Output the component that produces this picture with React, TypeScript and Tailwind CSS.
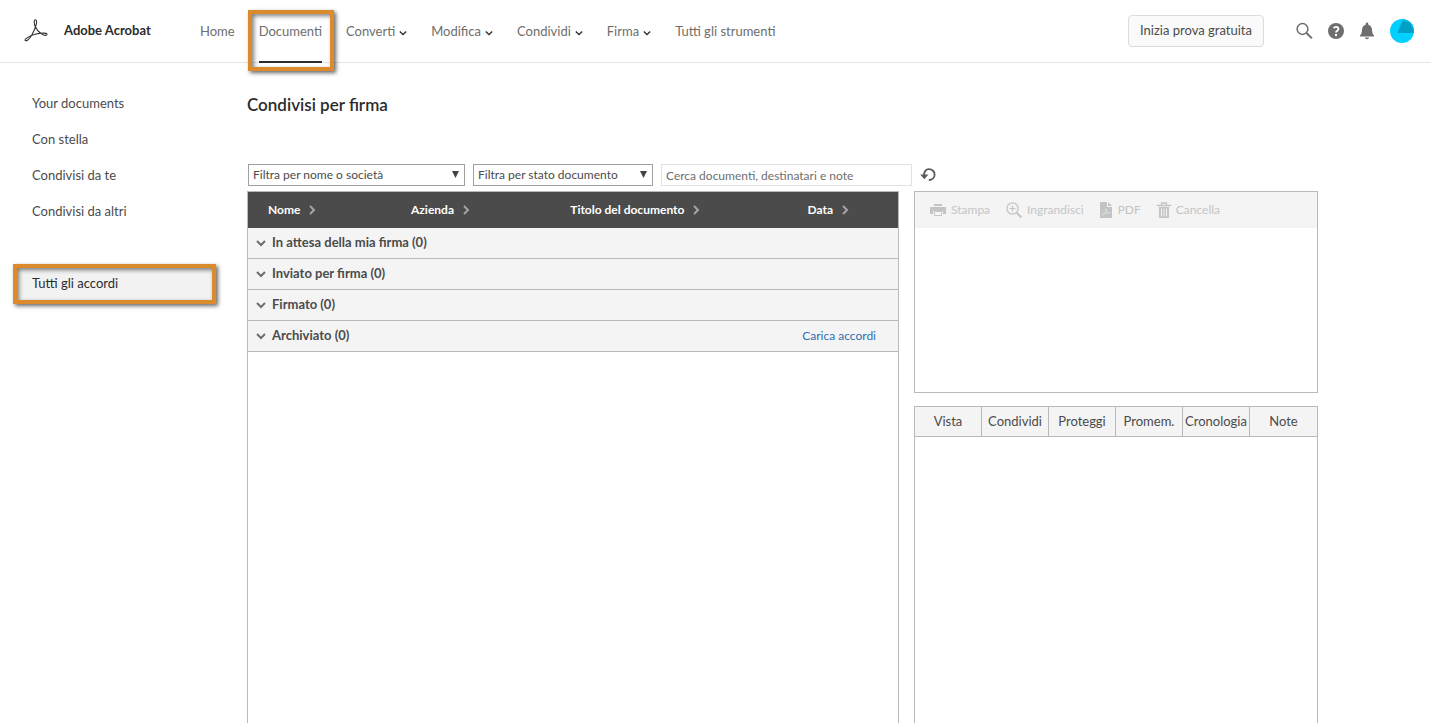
import React from 'react'
import clsx from 'clsx'

const navItems = [
  { label: 'Home' },
  { label: 'Documenti', active: true },
  { label: 'Converti', menu: true },
  { label: 'Modifica', menu: true },
  { label: 'Condividi', menu: true },
  { label: 'Firma', menu: true },
  { label: 'Tutti gli strumenti' },
]

const sideItems = ['Your documents', 'Con stella', 'Condivisi da te', 'Condivisi da altri']

const columns = ['Nome', 'Azienda', 'Titolo del documento', 'Data']

const groups = [
  { label: 'In attesa della mia firma (0)' },
  { label: 'Inviato per firma (0)' },
  { label: 'Firmato (0)' },
  { label: 'Archiviato (0)', link: 'Carica accordi' },
]

const tabs = ['Vista', 'Condividi', 'Proteggi', 'Promem.', 'Cronologia', 'Note']

function AcrobatLogo() {
  return (
    <svg width="24" height="24" viewBox="0 0 24 24" fill="none" stroke="#333" strokeWidth="1.100" strokeLinecap="round" strokeLinejoin="round">
      <path d="M2.600 21.600C.8 22.200.6 20.900 2 19.700c2.200-1.900 5.400-3.400 9-4.400 3.200-.9 6.600-1.300 9.300-1.200 2.500.1 3.100 1 2.400 1.700-1 .9-3.300.3-5.200-.9-2.600-1.600-5.200-4.700-6.400-7.700C10 4.200 9.800.8 11.300.7c1.500 0 1.500 2.800.7 5.700C10.800 10.700 6.200 20.500 2.600 21.600Z" />
    </svg>
  )
}

function Chevron({ className, direction = 'down', width = 2 }: { className?: string; direction?: 'down' | 'right'; width?: number }) {
  return (
    <svg className={className} viewBox="0 0 10 10" fill="none" stroke="currentColor" strokeWidth={width}>
      <path d={direction === 'down' ? 'M1 3l4 4 4-4' : 'M3 1l4 4-4 4'} />
    </svg>
  )
}

function SearchIcon() {
  return (
    <svg width="17" height="18" viewBox="0 0 17 18" fill="none" stroke="#6e6e6e">
      <circle cx="6.500" cy="7" r="5.400" strokeWidth="1.500" />
      <path d="M10.500 11l5.400 5.400" strokeWidth="2" />
    </svg>
  )
}

function HelpIcon() {
  return (
    <svg width="16" height="16" viewBox="0 0 16 16">
      <circle cx="8" cy="8" r="8" fill="#6e6e6e" />
      <path d="M5.600 5.200C6.300 4.300 7.200 3.900 8.100 3.900c1.400 0 2.300.8 2.300 2 0 1.900-2.300 1.900-2.300 3.700" fill="none" stroke="#fff" strokeWidth="1.900" />
      <circle cx="8" cy="12" r="1.200" fill="#fff" />
    </svg>
  )
}

function BellIcon() {
  return (
    <svg width="16" height="18" viewBox="0 0 16 18" fill="#6e6e6e">
      <path d="M8 .5c.9 0 1.300.6 1.300 1.500v.7c2.500.6 3.500 2.500 3.700 5 .2 3 .6 4.500 2 5.900v.9H1v-.9c1.400-1.400 1.800-2.900 2-5.900.2-2.500 1.200-4.400 3.700-5V2C6.700 1.100 7.100.5 8 .5Z" />
      <path d="M6 15.600h4c-.1 1-.9 1.700-2 1.700s-1.900-.7-2-1.700Z" />
    </svg>
  )
}

function Avatar() {
  return (
    <svg width="24" height="24" viewBox="0 0 24 24">
      <defs>
        <clipPath id="avatar">
          <circle cx="12" cy="12" r="12" />
        </clipPath>
      </defs>
      <g clipPath="url(#avatar)">
        <path fill="#00d0ff" d="M0 0h24v24H0z" />
        <path fill="#00b9e4" d="M12 0h12v14L12 2z" />
        <path fill="#009fc7" d="M12 2.500 19.500 3 24 14H7.500z" />
      </g>
    </svg>
  )
}

function ResetIcon() {
  return (
    <svg width="16" height="16" viewBox="0 0 16 16" fill="none" stroke="#5a5a5a" strokeWidth="1.800">
      <path d="M4.200 8.500C3.700 4.500 6 2.200 9 2.200c3.200 0 5.600 2.400 5.600 5.300 0 3-2.200 5.400-5.800 5.500" />
      <path d="M.2 7.600h8.200L4.300 12.300z" fill="#5a5a5a" stroke="none" />
    </svg>
  )
}

function PrintIcon() {
  return (
    <svg width="16" height="16" viewBox="0 0 16 16" fill="#c4c4c4">
      <path d="M4 2h8v2H4zM1 5h14c.6 0 1 .4 1 1v5c0 .6-.4 1-1 1h-2V9H3v3H1c-.6 0-1-.4-1-1V6c0-.6.4-1 1-1Z" />
      <path d="M4.500 9.500h7v4h-7z" fill="#f8f8f8" stroke="#c4c4c4" />
    </svg>
  )
}

function ZoomIcon() {
  return (
    <svg width="16" height="16" viewBox="0 0 16 16" fill="none" stroke="#c4c4c4">
      <circle cx="6.500" cy="6.500" r="5.600" strokeWidth="1.300" />
      <path d="M6.500 3.500v6M3.500 6.500h6" strokeWidth="1.200" />
      <path d="M10.700 10.700l4.700 4.700" strokeWidth="2" />
    </svg>
  )
}

function PdfIcon() {
  return (
    <svg width="13" height="16" viewBox="0 0 13 16" fill="#c4c4c4">
      <path d="M0 0h7v5h5v11H0zM8 0l4 4H8z" />
      <path d="M2.500 13c2-1 3.500-4 3.500-6.500 0 2.500 1.500 4 3.500 4.500-2.500-.2-5 .5-7 2Z" fill="none" stroke="#f4f4f4" strokeWidth=".5" />
    </svg>
  )
}

function TrashIcon() {
  return (
    <svg width="14" height="16" viewBox="0 0 14 16" fill="none" stroke="#c4c4c4">
      <path d="M0 3.500h14M4.500 3V1h5v2" strokeWidth="1.400" />
      <path d="M2 5h10v11H2z" fill="#c4c4c4" stroke="none" />
      <path d="M4.500 6.500v8M7 6.500v8M9.500 6.500v8" stroke="#f4f4f4" />
    </svg>
  )
}

const actions = [
  { label: 'Stampa', icon: <PrintIcon /> },
  { label: 'Ingrandisci', icon: <ZoomIcon /> },
  { label: 'PDF', icon: <PdfIcon /> },
  { label: 'Cancella', icon: <TrashIcon /> },
]

// Orange frame drawn over the element it calls out
function Highlight({ className }: { className: string }) {
  return (
    <span
      aria-hidden="true"
      className={clsx(
        'pointer-events-none absolute border-4 border-[#db8a2c] shadow-[2px_2px_4px_rgba(0,0,0,0.6),inset_2px_2px_4px_rgba(0,0,0,0.5)]',
        className,
      )}
    />
  )
}

function Header() {
  return (
    <header className="flex h-[63px] shrink-0 items-center border-b border-[#e4e4e4] pr-[17px] pl-6">
      <a href="#" className="flex w-44 shrink-0 items-center gap-4 text-[13px] font-bold text-[#2c2c2c]">
        <AcrobatLogo />
        Adobe Acrobat
      </a>
      <nav className="-mb-px flex items-center gap-6 self-stretch text-[13px] text-[#6e6e6e]">
        {navItems.map((item) =>
          item.menu ? (
            <button key={item.label} type="button" className="flex items-center gap-1 whitespace-nowrap">
              {item.label}
              <Chevron className="mt-[3px] size-2 text-[#333]" width={1.7} />
            </button>
          ) : (
            <a
              key={item.label}
              href="#"
              className={clsx('relative flex h-full items-center whitespace-nowrap', item.active && 'border-b-2 border-[#2c2c2c] pt-[2px]')}
            >
              {item.label}
              {item.active && <Highlight className="top-[10px] -right-3 -bottom-[10px] -left-[11px]" />}
            </a>
          ),
        )}
      </nav>
      <div className="ml-auto flex items-center gap-[15px]">
        <button
          type="button"
          className="mr-[17px] h-8 w-[136px] rounded-[4px] border border-[#dcdcdc] bg-[#fafafa] text-[13px] whitespace-nowrap text-[#4b4b4b]"
        >
          Inizia prova gratuita
        </button>
        <button type="button" aria-label="Cerca"><SearchIcon /></button>
        <button type="button" aria-label="Aiuto"><HelpIcon /></button>
        <button type="button" aria-label="Notifiche"><BellIcon /></button>
        <button type="button" aria-label="Profilo"><Avatar /></button>
      </div>
    </header>
  )
}

function Sidebar() {
  return (
    <aside className="w-[247px] shrink-0 pt-[23px] pr-[34px] pl-4 text-[13px] text-[#4b4b4b]">
      <ul>
        {sideItems.map((label) => (
          <li key={label}>
            <a href="#" className="flex h-9 items-center px-4">{label}</a>
          </li>
        ))}
      </ul>
      <a href="#" className="relative mt-9 flex h-9 items-center bg-[#f2f2f2] px-4 text-[#2c2c2c]">
        Tutti gli accordi
        <Highlight className="-inset-x-[3px] -inset-y-[2px]" />
      </a>
    </aside>
  )
}

function Filter({ label, className }: { label: string; className: string }) {
  return (
    <div className={clsx('relative', className)}>
      <select aria-label={label} className="block h-[22px] w-full appearance-none border border-[#a0a0a0] bg-white pl-1 text-[12px] text-[#4b4b4b]">
        <option>{label}</option>
      </select>
      <svg className="pointer-events-none absolute top-[7px] right-[6px]" width="7" height="7" viewBox="0 0 8 8" fill="#444">
        <path d="M0 0h8L4 8z" />
      </svg>
    </div>
  )
}

function Agreements() {
  return (
    <section className="border border-b-0 border-[#b9b9b9]">
      <table className="w-full table-fixed border-separate border-spacing-0 text-left text-[12px]">
        <colgroup>
          <col className="w-[22%]" />
          <col className="w-[24.5%]" />
          <col className="w-[36.5%]" />
          <col />
        </colgroup>
        <thead className="bg-[#4b4b4b] text-white">
          <tr className="h-9">
            {columns.map((label) => (
              <th key={label} scope="col" className="p-0 pl-5">
                <button type="button" className="flex items-center gap-[7px] font-bold whitespace-nowrap">
                  {label}
                  <Chevron direction="right" className="size-2.5 text-[#a5a5a5]" />
                </button>
              </th>
            ))}
          </tr>
        </thead>
        <tbody className="bg-[#f4f4f4] text-[#4b4b4b]">
          {groups.map((group) => (
            <tr key={group.label} className="h-[31px]">
              <th scope="rowgroup" colSpan={4} className="border-b border-[#b9b9b9] p-0 pr-[22px] pl-2">
                <div className="flex items-center justify-between">
                  <button type="button" className="flex items-center gap-1.5 text-[13px] font-bold">
                    <Chevron className="size-2.5 text-[#6e6e6e]" />
                    {group.label}
                  </button>
                  {group.link && <a href="#" className="font-normal text-[#2f6eb5]">{group.link}</a>}
                </div>
              </th>
            </tr>
          ))}
        </tbody>
      </table>
    </section>
  )
}

function Preview() {
  return (
    <div className="flex flex-col gap-[13px]">
      <section className="h-[202px] border border-[#b9b9b9]">
        <div className="flex h-9 items-center gap-4 bg-[#f4f4f4] pl-[15px] text-[12px] text-[#c4c4c4]">
          {actions.map((action) => (
            <button key={action.label} type="button" className="flex items-center gap-[5px]">
              {action.icon}
              {action.label}
            </button>
          ))}
        </div>
      </section>
      <section className="flex-1 border border-b-0 border-[#b9b9b9]">
        <div role="tablist" className="grid h-[30px] grid-cols-6 divide-x divide-[#b9b9b9] border-b border-[#b9b9b9] bg-[#f4f4f4] text-[13px] text-[#4b4b4b]">
          {tabs.map((label) => (
            <button key={label} type="button" role="tab" className="overflow-hidden whitespace-nowrap">{label}</button>
          ))}
        </div>
      </section>
    </div>
  )
}

export default function App() {
  return (
    <div className="flex min-h-screen flex-col bg-white font-['Lato','Noto_Sans',sans-serif]">
      <Header />
      <div className="flex flex-1">
        <Sidebar />
        <main className="flex max-w-[1071px] flex-1 flex-col">
          <h1 className="mt-[30px] text-[17px] leading-6 font-semibold text-[#2c2c2c]">Condivisi per firma</h1>
          <div className="mt-[47px] flex gap-2 pl-px">
            <Filter label="Filtra per nome o società" className="w-[217px]" />
            <Filter label="Filtra per stato documento" className="w-[180px]" />
            <input
              type="text"
              aria-label="Cerca documenti"
              placeholder="Cerca documenti, destinatari e note"
              className="h-[22px] w-[251px] border border-[#e1e1e1] px-1 text-[12px] placeholder:text-[#6e6e6e]"
            />
            <button type="button" aria-label="Reimposta"><ResetIcon /></button>
          </div>
          <div className="mt-[5px] grid flex-1 grid-cols-[652fr_404fr] gap-[15px]">
            <Agreements />
            <Preview />
          </div>
        </main>
      </div>
    </div>
  )
}
